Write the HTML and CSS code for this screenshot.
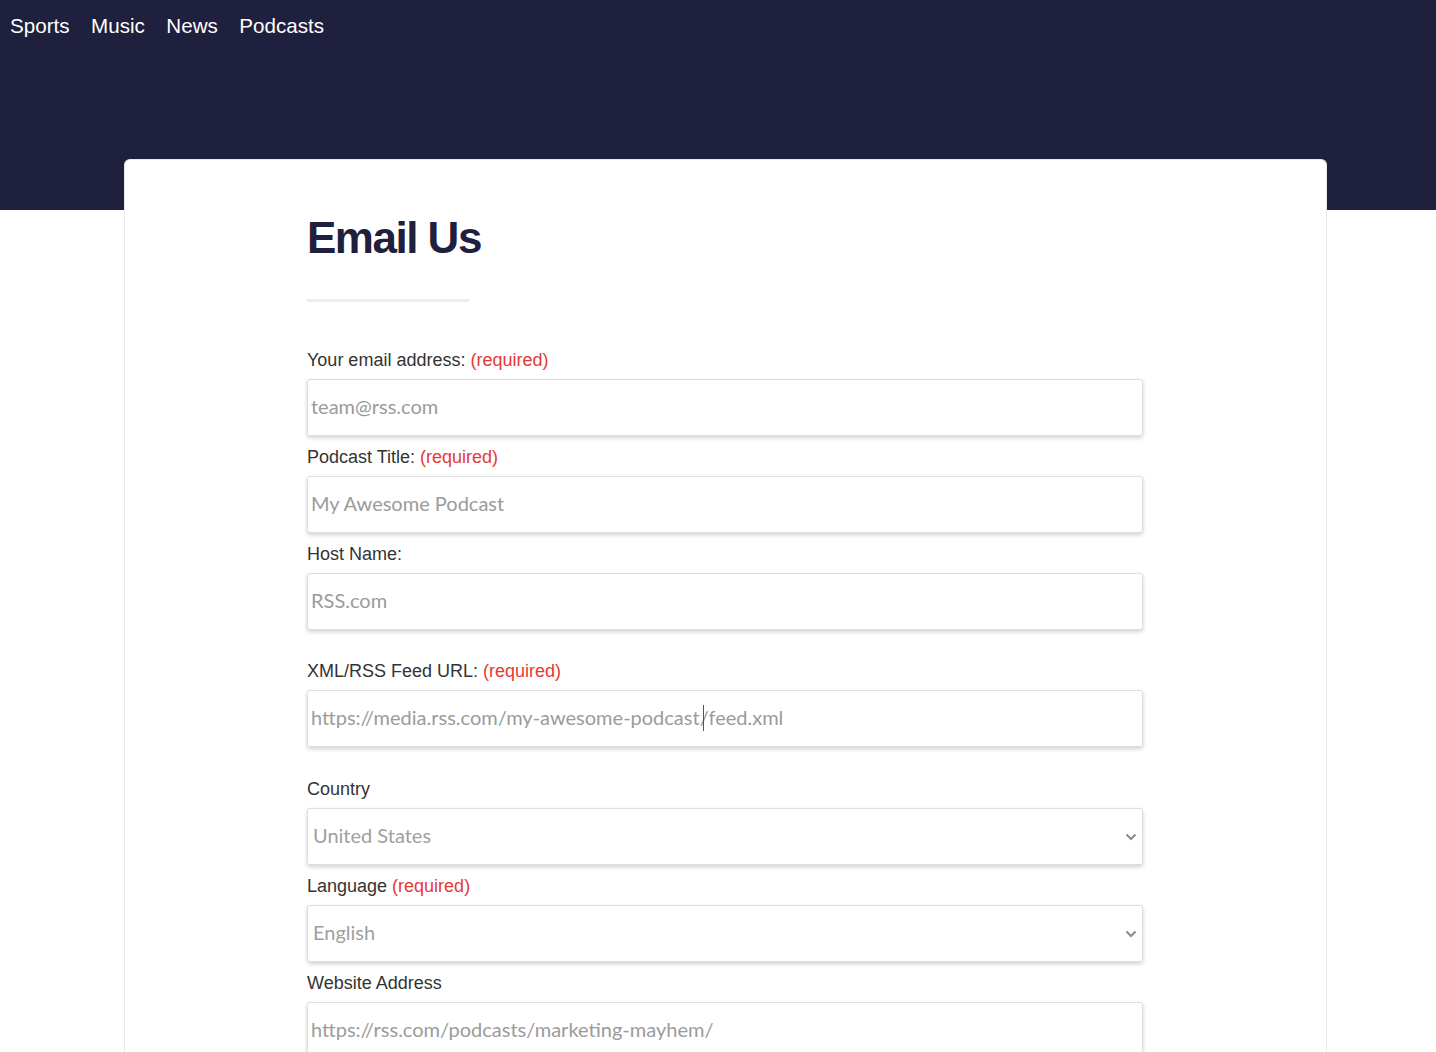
FILE: index.html
```html
<!DOCTYPE html>
<html lang="en">
<head>
<meta charset="utf-8">
<title>Email Us</title>
<link rel="stylesheet" href="styles.css">
</head>
<body>
<header class="top">
  <nav class="nav">
    <a href="#">Sports</a>
    <a href="#">Music</a>
    <a href="#">News</a>
    <a href="#">Podcasts</a>
  </nav>
</header>
<main class="card">
  <div class="content">
    <h1 class="title">Email Us</h1>
    <div class="bar"></div>
    <form class="form">
      <div class="field">
        <label>Your email address: <span class="req">(required)</span></label>
        <input type="text" placeholder="team@rss.com">
      </div>
      <div class="field">
        <label>Podcast Title: <span class="req">(required)</span></label>
        <input type="text" placeholder="My Awesome Podcast">
      </div>
      <div class="field spaced">
        <label>Host Name:</label>
        <input type="text" placeholder="RSS.com">
      </div>
      <div class="field spaced2">
        <label>XML/RSS Feed URL: <span class="req">(required)</span></label>
        <div class="input-wrap">
          <input type="text" placeholder="https://media.rss.com/my-awesome-podcast/feed.xml">
          <span class="caret"></span>
        </div>
      </div>
      <div class="field">
        <label>Country</label>
        <div class="select-wrap">
          <select><option>United States</option></select>
          <svg class="chev" width="12" height="8" viewBox="0 0 12 8"><path d="M1.5 1.5 L6 6 L10.5 1.5" fill="none" stroke="#8a8a8a" stroke-width="2"/></svg>
        </div>
      </div>
      <div class="field">
        <label>Language <span class="req">(required)</span></label>
        <div class="select-wrap">
          <select><option>English</option></select>
          <svg class="chev" width="12" height="8" viewBox="0 0 12 8"><path d="M1.5 1.5 L6 6 L10.5 1.5" fill="none" stroke="#8a8a8a" stroke-width="2"/></svg>
        </div>
      </div>
      <div class="field">
        <label>Website Address</label>
        <input type="text" placeholder="https://rss.com/podcasts/marketing-mayhem/">
      </div>
    </form>
  </div>
</main>
</body>
</html>
```

FILE: styles.css
```css
html, body {
  margin: 0;
  padding: 0;
  background: #ffffff;
  font-family: "Liberation Sans", Arial, sans-serif;
}
.top {
  background: #1e203d;
  height: 210px;
}
.nav {
  display: flex;
  gap: 21.5px;
  padding: 13px 0 0 10px;
}
.nav a {
  color: #ffffff;
  text-decoration: none;
  font-size: 20.6px;
  line-height: 26px;
}
.card {
  margin: -51px 0 0 124px;
  width: 1203px;
  background: #ffffff;
  border: 1px solid #e6e7ea;
  border-bottom: none;
  border-radius: 6px 6px 0 0;
  box-sizing: border-box;
  min-height: 900px;
}
.content {
  width: 836px;
  margin-left: 182px;
  padding-top: 50px;
}
.title {
  margin: 0;
  font-size: 44px;
  line-height: 56px;
  font-weight: 700;
  color: #1e203d;
  letter-spacing: -1.5px;
}
.bar {
  width: 162px;
  height: 3px;
  background: #e8eef3;
  margin-top: 33px;
}
.form {
  margin-top: 47px;
}
.field {
  display: flex;
  flex-direction: column;
  margin-bottom: 10px;
}
.field.spaced {
  margin-bottom: 30px;
}
.field.spaced2 {
  margin-bottom: 31px;
}
.field label {
  font-size: 18px;
  line-height: 22px;
  color: #333333;
  margin-bottom: 8px;
}
.req {
  color: #e53935;
}
.field input,
.field select {
  box-sizing: border-box;
  width: 836px;
  height: 57px;
  border: 1px solid #dedede;
  border-radius: 3px;
  box-shadow: 0 2px 4px rgba(0, 0, 0, 0.18);
  background: #ffffff;
  font-family: Lato, "Open Sans", sans-serif;
  font-size: 20px;
  padding: 0 3px 3px;
  color: #999999;
  outline: none;
}
.field input::placeholder {
  color: #9b9b9b;
}
.input-wrap,
.select-wrap {
  position: relative;
}
.caret {
  position: absolute;
  left: 396px;
  top: 15px;
  width: 1px;
  height: 26px;
  background: #555555;
}
.field select {
  appearance: none;
  -webkit-appearance: none;
  padding: 0 5px 3px;
  color: #a0a0a0;
}
.chev {
  position: absolute;
  right: 6px;
  top: 25px;
  pointer-events: none;
}
```
